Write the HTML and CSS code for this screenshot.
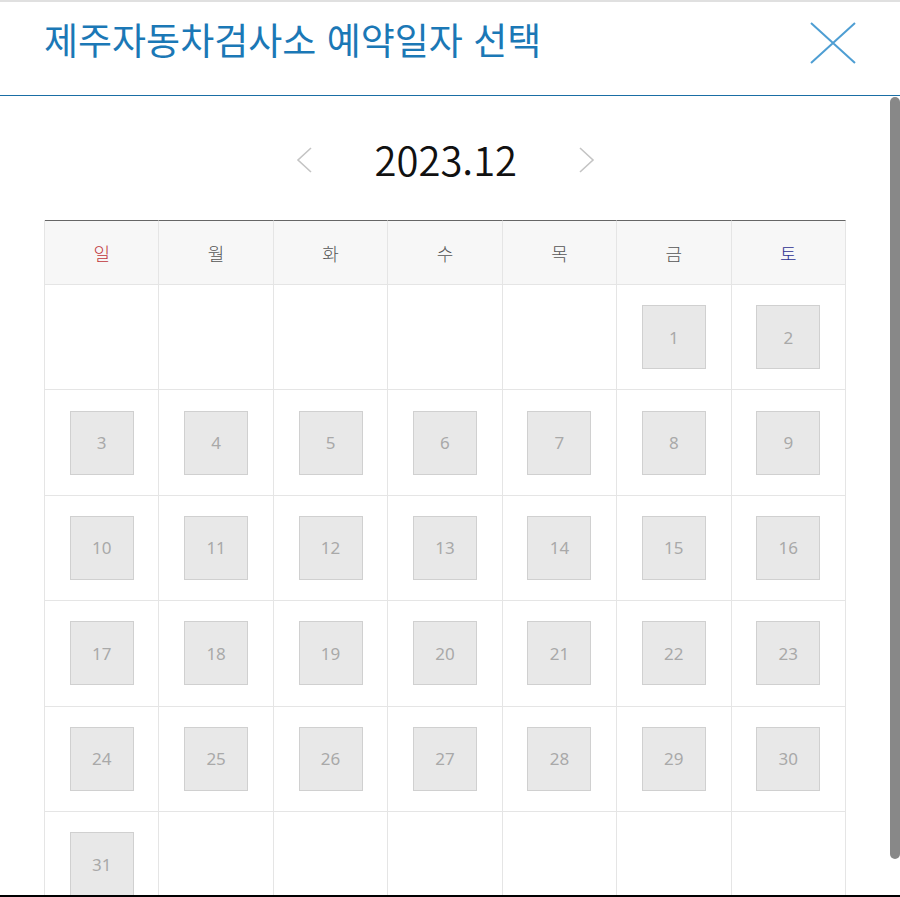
FILE: index.html
```html
<!DOCTYPE html>
<html lang="ko">
<head>
<meta charset="utf-8">
<title>제주자동차검사소 예약일자 선택</title>
<link rel="stylesheet" href="styles.css">
</head>
<body>
<div class="modal">
  <header class="modal-head">
    <h1 class="title">제주자동차검사소 예약일자 선택</h1>
    <button class="close" aria-label="닫기">
      <svg width="46" height="42" viewBox="0 0 46 42"><path d="M1 1 L45 41 M45 1 L1 41" stroke="#4e9ed3" stroke-width="2" fill="none"/></svg>
    </button>
  </header>
  <main class="modal-body">
    <div class="month-nav">
      <button class="arrow" aria-label="이전달">
        <svg width="16" height="26" viewBox="0 0 16 26"><path d="M15 1 L2 13 L15 25" stroke="#c4c4c4" stroke-width="1.6" fill="none"/></svg>
      </button>
      <span class="month">2023.12</span>
      <button class="arrow" aria-label="다음달">
        <svg width="16" height="26" viewBox="0 0 16 26"><path d="M1 1 L14 13 L1 25" stroke="#c4c4c4" stroke-width="1.6" fill="none"/></svg>
      </button>
    </div>
    <div class="calendar">
      <div class="wd sun">일</div>
      <div class="wd">월</div>
      <div class="wd">화</div>
      <div class="wd">수</div>
      <div class="wd">목</div>
      <div class="wd">금</div>
      <div class="wd sat">토</div>

      <div class="cell"></div><div class="cell"></div><div class="cell"></div><div class="cell"></div><div class="cell"></div>
      <div class="cell"><span class="day">1</span></div>
      <div class="cell"><span class="day">2</span></div>

      <div class="cell"><span class="day">3</span></div>
      <div class="cell"><span class="day">4</span></div>
      <div class="cell"><span class="day">5</span></div>
      <div class="cell"><span class="day">6</span></div>
      <div class="cell"><span class="day">7</span></div>
      <div class="cell"><span class="day">8</span></div>
      <div class="cell"><span class="day">9</span></div>

      <div class="cell"><span class="day">10</span></div>
      <div class="cell"><span class="day">11</span></div>
      <div class="cell"><span class="day">12</span></div>
      <div class="cell"><span class="day">13</span></div>
      <div class="cell"><span class="day">14</span></div>
      <div class="cell"><span class="day">15</span></div>
      <div class="cell"><span class="day">16</span></div>

      <div class="cell"><span class="day">17</span></div>
      <div class="cell"><span class="day">18</span></div>
      <div class="cell"><span class="day">19</span></div>
      <div class="cell"><span class="day">20</span></div>
      <div class="cell"><span class="day">21</span></div>
      <div class="cell"><span class="day">22</span></div>
      <div class="cell"><span class="day">23</span></div>

      <div class="cell"><span class="day">24</span></div>
      <div class="cell"><span class="day">25</span></div>
      <div class="cell"><span class="day">26</span></div>
      <div class="cell"><span class="day">27</span></div>
      <div class="cell"><span class="day">28</span></div>
      <div class="cell"><span class="day">29</span></div>
      <div class="cell"><span class="day">30</span></div>

      <div class="cell"><span class="day">31</span></div>
      <div class="cell"></div><div class="cell"></div><div class="cell"></div><div class="cell"></div><div class="cell"></div><div class="cell"></div>
    </div>
    <div class="scroll-thumb"></div>
  </main>
</div>
</body>
</html>
```
FILE: styles.css
```css
* { box-sizing: border-box; }
html, body { margin: 0; padding: 0; background: #fff; }
body {
  font-family: "Noto Sans", "Noto Sans CJK KR", sans-serif;
  width: 900px;
  height: 897px;
  overflow: hidden;
}
.modal {
  height: 897px;
  display: flex;
  flex-direction: column;
  border-top: 2px solid #e0e0e0;
  border-bottom: 2px solid #000;
  overflow: hidden;
}
.modal-head {
  height: 94px;
  flex: none;
  display: flex;
  align-items: center;
  justify-content: space-between;
  padding: 0 44px 0 44px;
  border-bottom: 1px solid #1a6ea5;
}
.title {
  margin: 0;
  font-family: "Noto Sans CJK KR", sans-serif;
  font-weight: 400;
  font-size: 37px;
  line-height: 1;
  color: #1b78b6;
  position: relative;
  top: -9px;
}
.close {
  border: 0;
  background: none;
  padding: 0;
  width: 46px;
  height: 42px;
  position: relative;
  top: -6px;
  cursor: pointer;
}
.close svg, .arrow svg { display: block; }
.modal-body {
  flex: 1;
  position: relative;
  padding: 32px 44px 0 44px;
  overflow: hidden;
}
.month-nav {
  width: 802px;
  height: 64px;
  display: flex;
  align-items: center;
  justify-content: center;
  gap: 63px;
  margin-bottom: 28px;
}
.arrow {
  border: 0;
  background: none;
  padding: 0;
  cursor: pointer;
}
.month {
  font-family: "Noto Sans CJK KR", sans-serif;
  font-weight: 350;
  font-size: 40px;
  color: #111;
  line-height: 1;
  width: 141px;
  text-align: center;
  position: relative;
  top: -1px;
}
.calendar {
  width: 802px;
  display: grid;
  grid-template-columns: repeat(7, 1fr);
  grid-template-rows: 65px;
  grid-auto-rows: 105.4px;
  border-left: 1px solid #e5e5e5;
}
.wd {
  background: #f7f7f7;
  border-top: 1px solid #666;
  border-right: 1px solid #e5e5e5;
  border-bottom: 1px solid #e5e5e5;
  display: flex;
  align-items: center;
  justify-content: center;
  font-family: "Noto Sans CJK KR", sans-serif;
  font-weight: 300;
  font-size: 18px;
  color: #555;
}
.wd.sun { color: #c0353b; }
.wd.sat { color: #2e3192; }
.cell {
  border-right: 1px solid #e5e5e5;
  border-bottom: 1px solid #e5e5e5;
  display: flex;
  align-items: center;
  justify-content: center;
}
.day {
  width: 64px;
  height: 64px;
  background: #e8e8e8;
  border: 1px solid #d0d0d0;
  display: flex;
  align-items: center;
  justify-content: center;
  font-size: 17px;
  color: #a9a9a9;
}
.scroll-thumb {
  position: absolute;
  top: 1px;
  right: 0;
  width: 10px;
  height: 762px;
  background: #888;
  border-radius: 5px;
}
```
